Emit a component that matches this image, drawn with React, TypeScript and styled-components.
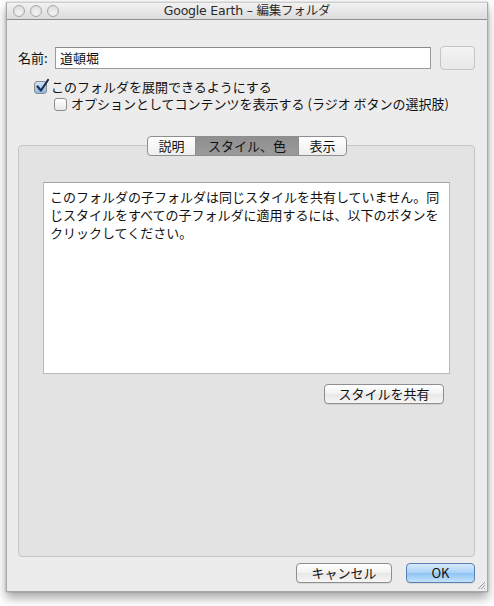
import styled, { createGlobalStyle } from "styled-components";

const GlobalStyle = createGlobalStyle`
  html, body {
    margin: 0;
    padding: 0;
    background: #ffffff;
  }
  body {
    font-family: "Noto Sans CJK JP", "Liberation Sans", sans-serif;
    font-size: 13px;
    color: #111;
  }
`;

const Page = styled.div`
  width: 494px;
  height: 606px;
  padding: 2px 6px 0 6px;
  box-sizing: border-box;
`;

const Window = styled.div`
  width: 482px;
  height: 590px;
  display: flex;
  flex-direction: column;
  background: #ececec;
  border: 1px solid #a9a9a9;
  border-top-color: #cfcfcf;
  box-sizing: border-box;
  box-shadow: 0 6px 10px rgba(0, 0, 0, 0.35), 0 0 2px rgba(0, 0, 0, 0.25);
  position: relative;
`;

const TitleBar = styled.div`
  height: 16px;
  flex: none;
  display: flex;
  align-items: center;
  position: relative;
  background: linear-gradient(#f2f2f2, #dcdcdc);
  border-bottom: 1px solid #8f8f8f;
`;

const Lights = styled.div`
  display: flex;
  gap: 5px;
  padding-left: 6px;
`;

const Light = styled.span`
  width: 12px;
  height: 12px;
  border-radius: 50%;
  border: 1px solid #a8a8a8;
  box-sizing: border-box;
  background: radial-gradient(circle at 50% 70%, #f4f4f4, #d8d8d8);
`;

const Title = styled.div`
  position: absolute;
  left: 0;
  right: 0;
  top: 0;
  height: 16px;
  line-height: 16px;
  text-align: center;
  font-size: 12.5px;
  color: #2a2a2a;
  font-family: "DejaVu Sans", "Noto Sans CJK JP", sans-serif;
  letter-spacing: -0.2px;
`;

const Content = styled.div`
  flex: 1;
  display: flex;
  flex-direction: column;
  padding: 26px 12px 0 11px;
`;

const NameRow = styled.div`
  display: flex;
  align-items: center;
  height: 24px;
`;

const Label = styled.span`
  font-size: 13px;
  line-height: 16px;
  width: 37px;
  color: #111;
`;

const TextInput = styled.div`
  width: 377px;
  height: 22px;
  box-sizing: border-box;
  background: #fff;
  border: 1px solid #9a9a9a;
  border-top-color: #8a8a8a;
  padding: 0 4px;
  line-height: 20px;
  font-size: 13px;
`;

const SmallButton = styled.div`
  width: 35px;
  height: 24px;
  margin-left: 9px;
  box-sizing: border-box;
  border: 1px solid #c4c4c4;
  border-radius: 4px;
  background: linear-gradient(#f4f4f4, #e8e8e8);
`;

const CheckRow = styled.div<{ $indent: number; $top: number }>`
  display: flex;
  align-items: center;
  gap: 4px;
  margin-left: ${(p) => p.$indent}px;
  margin-top: ${(p) => p.$top}px;
  height: 16px;
  font-size: 13px;
  line-height: 16px;
`;

const Box = styled.span<{ $checked?: boolean }>`
  width: 13px;
  height: 13px;
  box-sizing: border-box;
  border: 1px solid #8c8c8c;
  border-radius: 3px;
  background: ${(p) =>
    p.$checked
      ? "linear-gradient(#cfe3f7, #8ab7e4)"
      : "linear-gradient(#ffffff, #e9e9e9)"};
  position: relative;
  flex: none;
`;

const Tick = styled.svg`
  position: absolute;
  left: 0px;
  top: -4px;
`;

const TabPanel = styled.div`
  margin-top: 33px;
  position: relative;
  height: 412px;
  box-sizing: border-box;
  border: 1px solid #c6c6c6;
  border-radius: 4px;
  background: #e3e3e3;
  display: flex;
  flex-direction: column;
  padding: 36px 24px 0 24px;
`;

const Tabs = styled.div`
  position: absolute;
  top: -10px;
  left: 128px;
  display: flex;
  height: 20px;
  box-sizing: border-box;
  border: 1px solid #8e8e8e;
  border-radius: 4px;
  overflow: hidden;
  background: linear-gradient(#ffffff, #eeeeee);
`;

const Tab = styled.div<{ $active?: boolean; $w: number }>`
  width: ${(p) => p.$w}px;
  text-align: center;
  font-size: 13px;
  line-height: 18px;
  color: #111;
  border-left: 1px solid #8e8e8e;
  &:first-child {
    border-left: none;
  }
  background: ${(p) =>
    p.$active ? "linear-gradient(#8f8f8f, #9a9a9a)" : "transparent"};
`;

const TextArea = styled.div`
  height: 192px;
  box-sizing: border-box;
  background: #fff;
  border: 1px solid #b9b9b9;
  border-top-color: #a5a5a5;
  padding: 5px 6px;
  font-size: 13px;
  line-height: 18px;
  color: #111;
  overflow: hidden;
`;

const ShareRow = styled.div`
  display: flex;
  justify-content: flex-end;
  margin-top: 10px;
  padding-right: 6px;
`;

const Button = styled.div<{ $w: number; $default?: boolean }>`
  width: ${(p) => p.$w}px;
  height: 20px;
  box-sizing: border-box;
  border: 1px solid ${(p) => (p.$default ? "#5a7fb5" : "#8e8e8e")};
  border-radius: 4px;
  background: ${(p) =>
    p.$default
      ? "linear-gradient(#d6eafc 0%, #a9d1f7 50%, #8ec3f3 51%, #c3e3fd 100%)"
      : "linear-gradient(#ffffff, #f1f1f1 50%, #e7e7e7 51%, #f6f6f6)"};
  text-align: center;
  font-size: 13px;
  line-height: 18px;
  color: #111;
  box-shadow: 0 1px 0 rgba(0, 0, 0, 0.08);
`;

const Footer = styled.div`
  display: flex;
  justify-content: flex-end;
  gap: 14px;
  margin-top: 6px;
`;

const Grip = styled.svg`
  position: absolute;
  right: 1px;
  bottom: 1px;
`;

export default function App() {
  return (
    <>
      <GlobalStyle />
      <Page>
        <Window>
          <TitleBar>
            <Lights>
              <Light />
              <Light />
              <Light />
            </Lights>
            <Title>Google Earth – 編集フォルダ</Title>
          </TitleBar>
          <Content>
            <NameRow>
              <Label>名前:</Label>
              <TextInput>道頓堀</TextInput>
              <SmallButton />
            </NameRow>
            <CheckRow $indent={16} $top={9}>
              <Box $checked>
                <Tick width="16" height="16" viewBox="0 0 16 16">
                  <path
                    d="M2.5 8.5 L6 12.5 L13 2"
                    fill="none"
                    stroke="#1c2f55"
                    strokeWidth="2.2"
                    strokeLinecap="round"
                    strokeLinejoin="round"
                  />
                </Tick>
              </Box>
              <span>このフォルダを展開できるようにする</span>
            </CheckRow>
            <CheckRow $indent={36} $top={1}>
              <Box />
              <span>オプションとしてコンテンツを表示する (ラジオ ボタンの選択肢)</span>
            </CheckRow>
            <TabPanel>
              <Tabs>
                <Tab $w={47}>説明</Tab>
                <Tab $w={102} $active>
                  スタイル、色
                </Tab>
                <Tab $w={47}>表示</Tab>
              </Tabs>
              <TextArea>
                このフォルダの子フォルダは同じスタイルを共有していません。同じスタイルをすべての子フォルダに適用するには、以下のボタンをクリックしてください。
              </TextArea>
              <ShareRow>
                <Button $w={120}>スタイルを共有</Button>
              </ShareRow>
            </TabPanel>
            <Footer>
              <Button $w={96}>キャンセル</Button>
              <Button $w={69} $default>
                OK
              </Button>
            </Footer>
          </Content>
          <Grip width="10" height="10" viewBox="0 0 10 10">
            <path d="M9 2 L2 9 M9 5 L5 9 M9 8 L8 9" stroke="#999" strokeWidth="1" />
          </Grip>
        </Window>
      </Page>
    </>
  );
}
